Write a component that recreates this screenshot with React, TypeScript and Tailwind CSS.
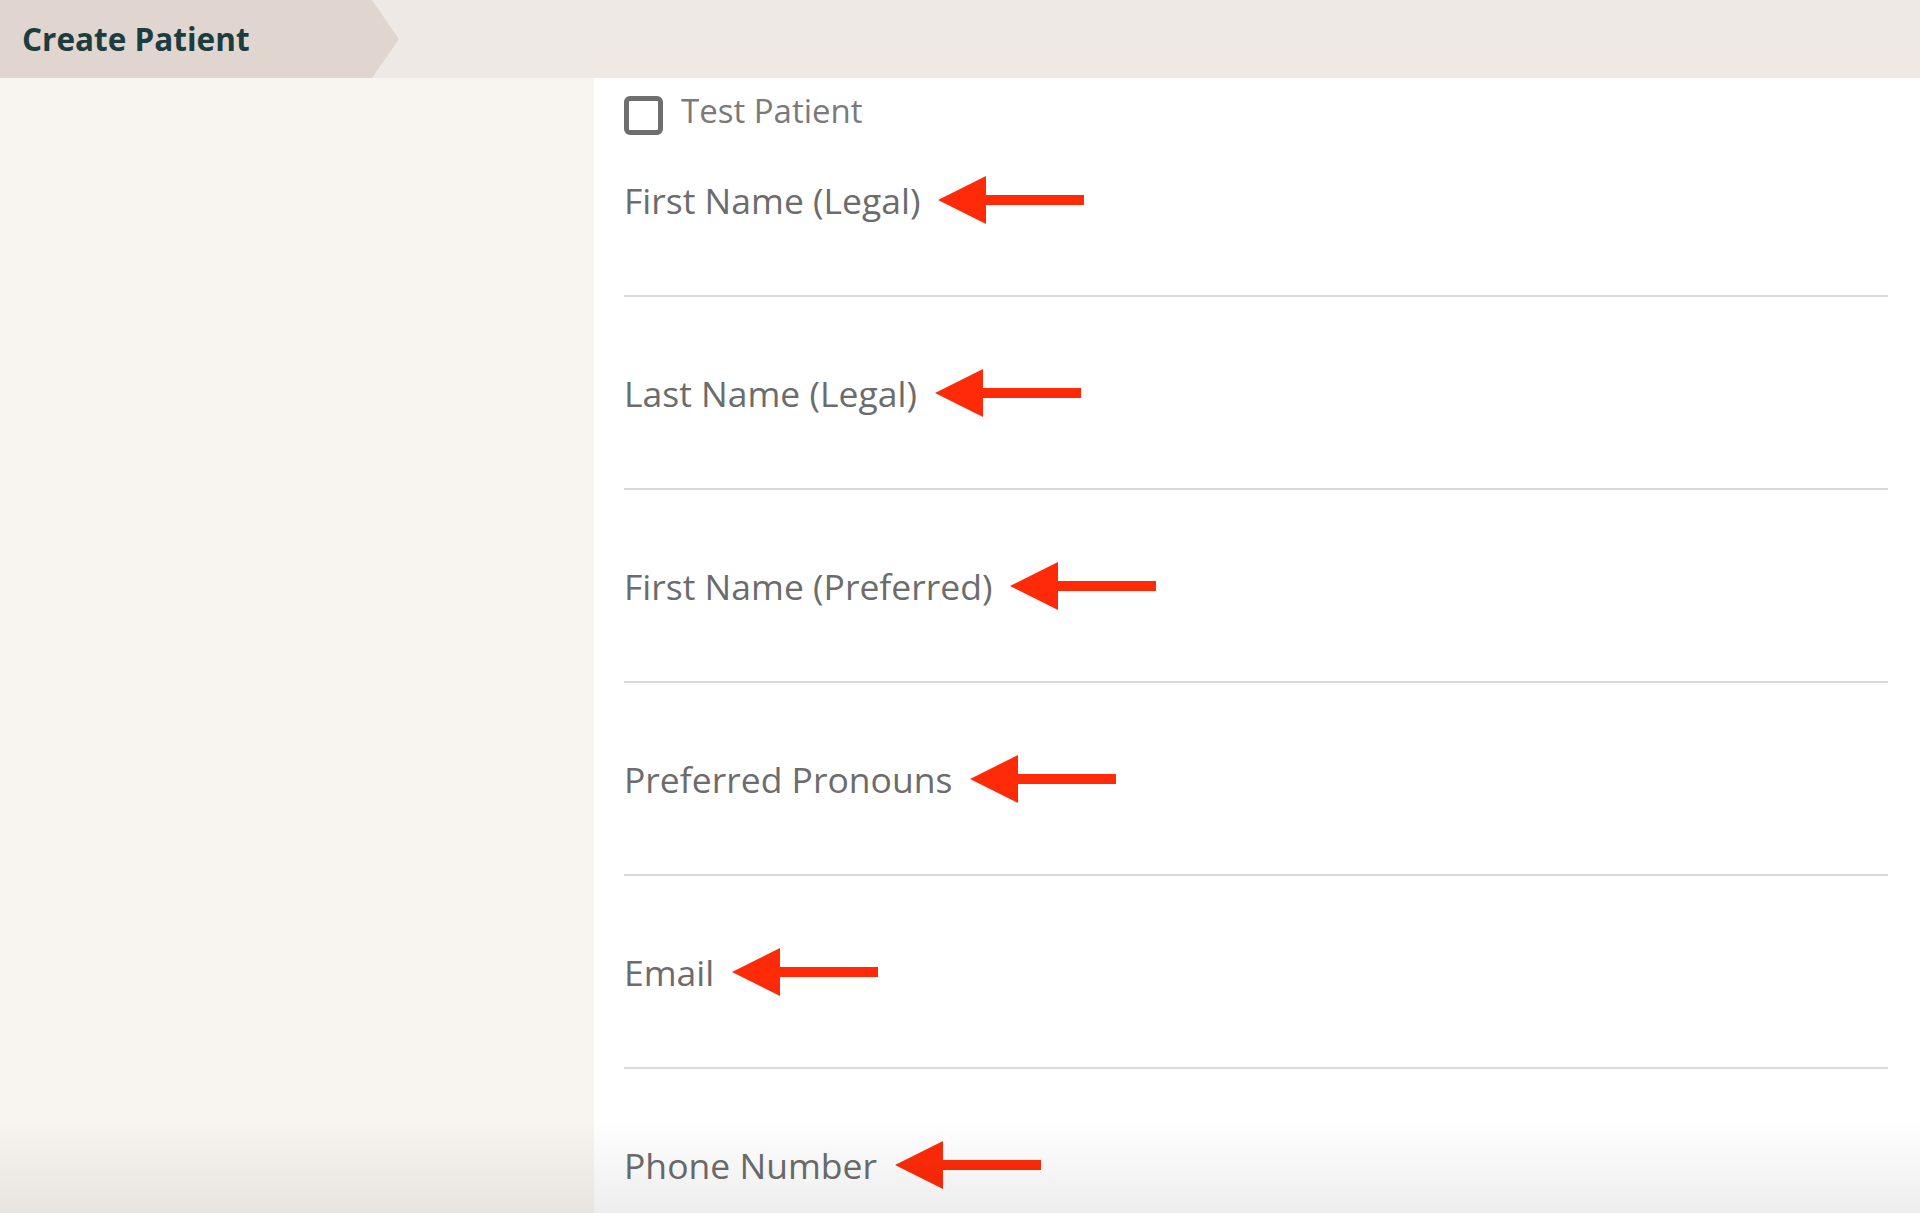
import React from "react";

const fields = [
  "First Name (Legal)",
  "Last Name (Legal)",
  "First Name (Preferred)",
  "Preferred Pronouns",
  "Email",
  "Phone Number",
];

function Arrow() {
  return (
    <svg width="146" height="50" viewBox="0 0 146 50" className="ml-[18px] shrink-0">
      <polygon points="0,25 48,1 48,49" fill="#fe2a08" />
      <rect x="46" y="20" width="100" height="10" fill="#fe2a08" />
    </svg>
  );
}

export default function App() {
  return (
    <div className="relative h-[1213px] w-full overflow-hidden bg-white font-['Open_Sans',sans-serif]">
      {/* Header with breadcrumb tab */}
      <div className="h-[78px] bg-[#efe9e5]">
        <div className="flex h-full w-[399px] items-center bg-[#e0d6cf] pl-[22px] [clip-path:polygon(0_0,372px_0,399px_50%,372px_100%,0_100%)]">
          <span className="text-[31.5px] font-bold text-[#1c3c40]">Create Patient</span>
        </div>
      </div>

      <div className="flex h-[1135px]">
        <div className="w-[594px] shrink-0 bg-[#f8f5f1]" />
        <div className="flex-1 bg-white pl-[30px] pr-[32px]">
          {/* Test patient checkbox */}
          <label className="mt-[18px] flex items-start">
            <span className="h-[39px] w-[39px] shrink-0 rounded-[6px] border-[5px] border-[#6e6e6e] bg-white" />
            <span className="ml-[18px] text-[33px] leading-[30px] text-[#7a7a7a]">Test Patient</span>
          </label>

          {fields.map((f, i) => (
            <div
              key={f}
              className={[
                "border-b-2 border-[#dadada] pb-[71px]",
                i === 0 ? "pt-[41px]" : "pt-[72px]",
              ].join(" ")}
            >
              <div className="flex h-[48px] items-center">
                <span className="text-[35.5px] leading-[48px] text-[#6c6c6c]">{f}</span>
                <Arrow />
              </div>
            </div>
          ))}
        </div>
      </div>

      {/* bottom fade */}
      <div className="pointer-events-none absolute inset-x-0 bottom-0 h-[95px] bg-gradient-to-b from-transparent to-black/[0.07]" />
    </div>
  );
}
